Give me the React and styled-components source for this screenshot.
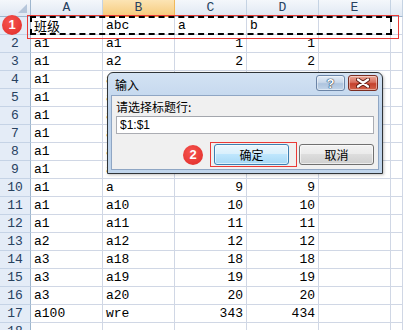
import styled, { createGlobalStyle } from "styled-components";

const GlobalStyle = createGlobalStyle`
  html, body {
    margin: 0;
    padding: 0;
    background: #fff;
    overflow: hidden;
  }
  body {
    font-family: "Liberation Mono", "Noto Sans CJK SC", monospace;
  }
`;

const columns = ["A", "B", "C", "D", "E", ""];

const rows = [
  ["班级", "abc", "a", "b"],
  ["a1", "a1", 1, 1],
  ["a1", "a2", 2, 2],
  ["a1", "a3", 3, 3],
  ["a1", "a4", 4, 4],
  ["a1", "a5", 5, 5],
  ["a1", "a6", 6, 6],
  ["a1", "a7", 7, 7],
  ["a1", "a8", 8, 8],
  ["a1", "a", 9, 9],
  ["a1", "a10", 10, 10],
  ["a1", "a11", 11, 11],
  ["a2", "a12", 12, 12],
  ["a3", "a18", 18, 18],
  ["a3", "a19", 19, 19],
  ["a3", "a20", 20, 20],
  ["a100", "wre", 343, 434],
  ["", "", "", ""],
];

function App() {
  return (
    <Page>
      <GlobalStyle />
      <Sheet>
        <Corner />
        {columns.map((c, i) => (
          <ColHead key={i} $active={c === "B"}>
            {c}
          </ColHead>
        ))}
        {rows.map((r, i) => (
          <Row key={i} index={i + 1} cells={r} />
        ))}
      </Sheet>

      <CopyMarquee />
      <Highlight $x={27} $y={15} $w={372} $h={24} />
      <Badge $x={2} $y={15}>1</Badge>

      <Dialog>
        <TitleBar>
          <Title>输入</Title>
          <Caption>
            <CapButton>
              <Help>?</Help>
            </CapButton>
            <CapButton $close>
              <svg width="14" height="10" viewBox="0 0 14 10">
                <path
                  d="M2 1.5 L12 8.5 M12 1.5 L2 8.5"
                  stroke="#5a1a12"
                  strokeWidth="4"
                  strokeLinecap="round"
                />
                <path
                  d="M2 1.5 L12 8.5 M12 1.5 L2 8.5"
                  stroke="#fff"
                  strokeWidth="2.2"
                  strokeLinecap="round"
                />
              </svg>
            </CapButton>
          </Caption>
        </TitleBar>
        <Body>
          <Label>请选择标题行:</Label>
          <Input readOnly value="$1:$1" />
          <Buttons>
            <Button $primary>确定</Button>
            <Button>取消</Button>
          </Buttons>
        </Body>
      </Dialog>

      <Highlight $x={210} $y={142} $w={87} $h={25} />
      <Badge $x={183} $y={145}>2</Badge>
    </Page>
  );
}

function Row({ index, cells }) {
  return (
    <>
      <RowHead>{index}</RowHead>
      {cells.map((v, i) => (
        <Cell key={i} $num={typeof v === "number"} $cjk={index === 1 && i === 0}>
          {v}
        </Cell>
      ))}
      <Cell />
      <Cell />
    </>
  );
}

const Page = styled.div`
  position: relative;
  width: 403px;
  height: 330px;
  overflow: hidden;
`;

const Sheet = styled.div`
  display: grid;
  grid-template-columns: 31px repeat(5, 72px) 1fr;
  grid-template-rows: 17px;
  grid-auto-rows: 18px;
  width: 403px;
  font-size: 13px;
  color: #000;
`;

const Corner = styled.div`
  position: relative;
  box-sizing: border-box;
  background: linear-gradient(#f4f7fb, #e0e8f3);
  border-right: 1px solid #9eb6ce;
  border-bottom: 1px solid #9eb6ce;

  &::after {
    content: "";
    position: absolute;
    right: 3px;
    bottom: 3px;
    width: 9px;
    height: 9px;
    background: #b6c6da;
    clip-path: polygon(100% 0, 100% 100%, 0 100%);
  }
`;

const ColHead = styled.div`
  box-sizing: border-box;
  text-align: center;
  line-height: 16px;
  color: #27415f;
  background: ${(p) =>
    p.$active
      ? "linear-gradient(#fce4b4, #f6cb7c)"
      : "linear-gradient(#f4f7fb, #e0e8f3)"};
  border-right: 1px solid ${(p) => (p.$active ? "#f0b85a" : "#c5d3e3")};
  border-bottom: 1px solid ${(p) => (p.$active ? "#f29536" : "#9eb6ce")};
`;

const RowHead = styled.div`
  box-sizing: border-box;
  text-align: center;
  line-height: 17px;
  color: #27415f;
  background: #e4ecf7;
  border-right: 1px solid #9eb6ce;
  border-bottom: 1px solid #c5d3e6;
`;

const Cell = styled.div`
  box-sizing: border-box;
  padding: 0 3px;
  line-height: 17px;
  white-space: nowrap;
  overflow: hidden;
  text-align: ${(p) => (p.$num ? "right" : "left")};
  font-family: ${(p) =>
    p.$cjk
      ? '"Noto Sans CJK SC", sans-serif'
      : '"Liberation Mono", "Noto Sans CJK SC", monospace'};
  border-right: 1px solid #d0d7e5;
  border-bottom: 1px solid #d0d7e5;
`;

const CopyMarquee = styled.div`
  position: absolute;
  left: 30px;
  top: 16px;
  width: 362px;
  height: 19px;
  box-sizing: border-box;
  border: 2px dashed #000;
`;

const Highlight = styled.div`
  position: absolute;
  left: ${(p) => p.$x}px;
  top: ${(p) => p.$y}px;
  width: ${(p) => p.$w}px;
  height: ${(p) => p.$h}px;
  box-sizing: border-box;
  border: 1.5px solid #ea3a36;
`;

const Badge = styled.div`
  position: absolute;
  left: ${(p) => p.$x}px;
  top: ${(p) => p.$y}px;
  width: 20px;
  height: 20px;
  border-radius: 50%;
  background: radial-gradient(circle at 40% 35%, #f6544f, #e02a26);
  color: #fff;
  font: bold 13px/20px "Liberation Sans", sans-serif;
  text-align: center;
`;

const Dialog = styled.div`
  position: absolute;
  left: 107px;
  top: 72px;
  width: 276px;
  box-sizing: border-box;
  display: flex;
  flex-direction: column;
  border: 1px solid #2f3438;
  border-radius: 6px 6px 0 0;
  background: linear-gradient(#d3e2f3, #bcd2eb 40%, #c0d5ec);
  padding: 0 3px 3px;
  box-shadow: 1px 1px 3px rgba(0, 0, 0, 0.25);
  font-family: "Noto Sans CJK SC", sans-serif;
`;

const TitleBar = styled.div`
  height: 22px;
  display: flex;
  align-items: center;
  justify-content: space-between;
  padding: 0 1px 0 4px;
`;

const Title = styled.span`
  font-size: 12px;
  color: #000;
`;

const Caption = styled.div`
  display: flex;
  gap: 3px;
  align-self: flex-start;
  margin-top: 2px;
`;

const CapButton = styled.div`
  width: ${(p) => (p.$close ? 30 : 29)}px;
  height: 16px;
  box-sizing: border-box;
  display: flex;
  align-items: center;
  justify-content: center;
  border-radius: 3px;
  border: 1px solid ${(p) => (p.$close ? "#7b2d22" : "#6b84a6")};
  background: ${(p) =>
    p.$close
      ? "linear-gradient(#eaa899, #d8705f 45%, #c4402c 55%, #d2644c)"
      : "linear-gradient(#e4edf7, #c9d8ea 45%, #aec4de 55%, #c2d4e9)"};
  box-shadow: inset 0 0 0 1px rgba(255, 255, 255, 0.45);
`;

const Help = styled.span`
  font: bold 13px/1 "Liberation Sans", sans-serif;
  color: #fff;
  text-shadow: 0 0 1px #1d3550, 0 0 1px #1d3550, 0 0 1px #1d3550;
`;

const Body = styled.div`
  display: flex;
  flex-direction: column;
  background: #f0f0f0;
  border: 1px solid #8fa6c4;
  padding: 3px 4px 4px 4px;
`;

const Label = styled.div`
  font-size: 12px;
  line-height: 16px;
  color: #000;
`;

const Input = styled.input`
  margin-top: 1px;
  height: 18px;
  box-sizing: border-box;
  border: 1px solid #abadb3;
  border-top-color: #a3a6ad;
  background: #fff;
  padding: 0 3px;
  font: 12px "Liberation Sans", sans-serif;
  color: #000;
  outline: none;
`;

const Buttons = styled.div`
  display: flex;
  justify-content: flex-end;
  gap: 10px;
  margin-top: 10px;
`;

const Button = styled.button`
  width: 75px;
  height: 21px;
  box-sizing: border-box;
  padding: 0;
  border-radius: 3px;
  font: 12px "Noto Sans CJK SC", sans-serif;
  color: #000;
  border: 1px solid ${(p) => (p.$primary ? "#3c7fb1" : "#707070")};
  background: ${(p) =>
    p.$primary
      ? "linear-gradient(#eaf6fd, #d9f0fc 45%, #bee6fd 50%, #a7d9f5)"
      : "linear-gradient(#f2f2f2, #ebebeb 45%, #dddddd 50%, #cfcfcf)"};
  box-shadow: inset 0 0 0 1px rgba(255, 255, 255, 0.6);
`;

export default App;
